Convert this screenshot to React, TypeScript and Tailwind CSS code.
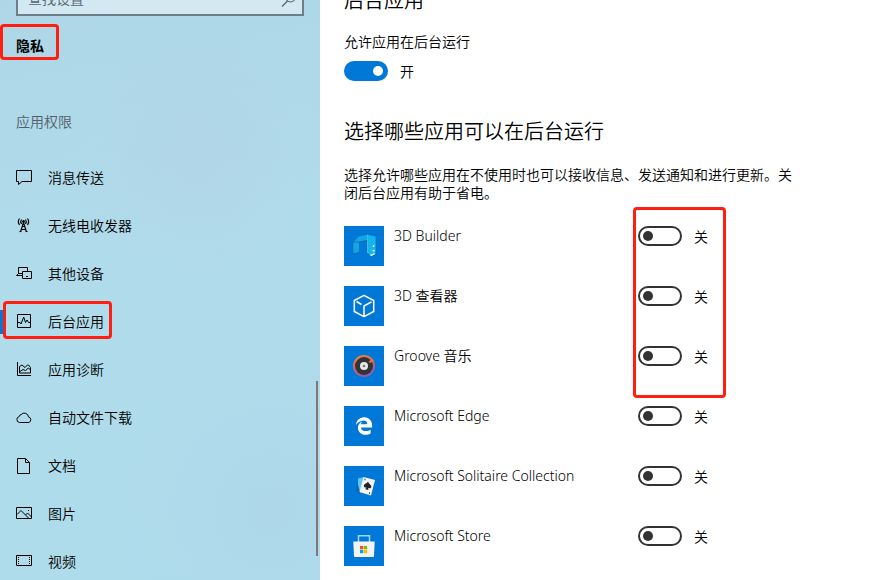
import { useState } from 'react';
import type { ReactNode } from 'react';
import { FaEdgeLegacy } from 'react-icons/fa6';

const NAV_ITEMS: { label: string; icon: ReactNode }[] = [
  { label: '消息传送', icon: <path d="M.5.5h15v11H6l-3.5 3v-3h-2z" /> },
  {
    label: '无线电收发器',
    icon: (
      <>
        <path d="m4.5 14 3-9.5 3 9.5M3.5 13.5h2M9.5 13.5h2M5.5 11.5h4M6.5 8.5h2" strokeWidth="1.2" />
        <path d="M3.5.5Q1.2 3.5 3.5 7M11.5.5q2.3 3 0 6.5M5.5 1.5q-1.5 2 0 4.5M9.5 1.5q1.5 2 0 4.5" strokeWidth="1.2" />
        <circle cx="7.5" cy="3.5" r="1" fill="currentColor" />
      </>
    ),
  },
  {
    label: '其他设备',
    icon: (
      <>
        <path d="M6.5 9.5h-6l2-2v-6h9v4M2.5 7.5h4" />
        <path d="M6.5 5.5h9v7h-9zM10 10.5h2" />
      </>
    ),
  },
  {
    label: '后台应用',
    icon: <path d="M1.5.5h13v13h-13zM2 8.5h2L5 10l2.7-7 1.8 5.5L11 6l1.5 2.5h2" />,
  },
  {
    label: '应用诊断',
    icon: (
      <>
        <path d="M1.5 0v13.5H15" />
        <path d="M3.5 11V4.5L6 3l3 2.5L11.5 3h1l2 2.5V11zM4 9.5l3-2 2.5 1 3-2.5 2 2" />
      </>
    ),
  },
  {
    label: '自动文件下载',
    icon: <path d="M3.5 12.5a3 3 0 0 1-.3-5.9 2.4 2.4 0 0 1 2-2.1 4.2 4.2 0 0 1 7.3 2.4 2.9 2.9 0 0 1 .3 5.6z" />,
  },
  { label: '文档', icon: <path d="M1.5.5h8l4 4v11h-12zM9.5.5v4h4" /> },
  {
    label: '图片',
    icon: <path d="M.5 1.5h15v11H.5zM1 8.5l4-4 7.5 7.5M9.5 9l2-2 4 4M12 4.5h1" />,
  },
  {
    label: '视频',
    icon: (
      <>
        <path d="M.5 1.5h15v10H.5z" />
        <path d="M2.5 3v8M13.5 3v8" strokeDasharray="1 1" />
      </>
    ),
  },
];

const APPS: { name: string; icon: ReactNode }[] = [
  {
    name: '3D Builder',
    icon: (
      <>
        <path d="m9 16 5.5-6 9-1.7v6.2l-8 1.5v10L9 28z" fill="#0fa5e6" stroke="#0a5f9e" strokeWidth=".5" />
        <path d="M9 16h6.5l8-1.5" fill="none" stroke="#0b6fae" strokeWidth=".8" />
        <path d="m23.5 8.3 8.5 2V28l-5 3-3.5-4z" fill="#12b5ec" stroke="#0a5f9e" strokeWidth=".5" />
        <path d="M23.5 8.5V27" stroke="#7bdcf7" strokeWidth=".6" />
        <path d="m28.5 21 1.8-3v3zM27.5 25l3-1.5v2zM26 29l4.5-2v1.5L27 30z" fill="#fff" />
      </>
    ),
  },
  {
    name: '3D 查看器',
    icon: (
      <path
        d="M20 9.3 29.7 14.5v11L20 30.7l-9.7-5.2v-11zM12.5 15.5l5 3M20 30V20l7.5-4.2"
        fill="none"
        stroke="#fff"
        strokeWidth="1.5"
        strokeLinejoin="round"
      />
    ),
  },
  {
    name: 'Groove 音乐',
    icon: (
      <>
        <defs>
          <linearGradient id="groove" x1="0" y1="0" x2=".4" y2="1">
            <stop offset="0" stopColor="#f58a3c" />
            <stop offset=".5" stopColor="#d8695e" />
            <stop offset="1" stopColor="#8e5bb5" />
          </linearGradient>
        </defs>
        <circle cx="20" cy="20" r="11" fill="url(#groove)" />
        <circle cx="20" cy="20" r="9" fill="#333" />
        <path d="m24.5 16 3.5-3.5 2 2-3.5 2.5z" fill="#e5714f" />
        <circle cx="20" cy="20" r="4" fill="#e9e9e9" />
        <circle cx="20" cy="20" r="1.3" fill="#777" />
      </>
    ),
  },
  { name: 'Microsoft Edge', icon: <FaEdgeLegacy x="11" y="11" size={18} color="#fff" /> },
  {
    name: 'Microsoft Solitaire Collection',
    icon: (
      <>
        <path d="m14 12.5 6-1.5-3 16-3-1z" fill="#5cc6fa" />
        <path d="m13 16-1 9 5 4z" fill="#0868b8" />
        <path d="m19.5 11 11.5 3-4 15.5-11.5-3.5z" fill="#f4f4f4" />
        <path d="M24 15.5c.5 2.5 3.7 3.2 3.3 5.5-.4 1.6-2.2 1.7-3.3.7l.4 2.3-3.2-.7 1.3-1.9c-1.5.4-2.900-.5-2.600-2 .5-1.9 3.1-1.6 4.1-3.9z" fill="#222" />
        <path d="M20.5 13.5h1M25 27h1" stroke="#444" strokeWidth="1.5" />
      </>
    ),
  },
  {
    name: 'Microsoft Store',
    icon: (
      <>
        <path d="M14.5 16V9.8h11V16" fill="none" stroke="#9ad8fa" strokeWidth="1.5" />
        <path d="M9.3 15.5h21.4L30 30q0 1-1 1H11q-1 0-1-1z" fill="#f3f3f3" />
        <path d="M16 20h3.3v3.3H16z" fill="#f25022" />
        <path d="M19.9 20h3.3v3.3h-3.3z" fill="#7fba00" />
        <path d="M16 23.9h3.3v3.3H16z" fill="#00a4ef" />
        <path d="M19.9 23.9h3.3v3.3h-3.3z" fill="#ffb900" />
      </>
    ),
  },
];

interface ToggleProps {
  name: string;
  checked: boolean;
  onChange: () => void;
}

/** 开关 */
function Toggle({ name, checked, onChange }: ToggleProps) {
  return (
    <label className="flex h-5 items-center gap-3">
      <input
        type="checkbox"
        role="switch"
        aria-label={name}
        checked={checked}
        onChange={onChange}
        className="flex h-5 w-11 shrink-0 appearance-none items-center rounded-full border-2 border-[#333] px-[3px] before:size-[10px] before:rounded-full before:bg-[#333] checked:justify-end checked:border-[#0078d7] checked:bg-[#0078d7] checked:before:bg-white"
      />
      <span className="pt-[2px]">{checked ? '开' : '关'}</span>
    </label>
  );
}

/** 左侧导航 */
function Sidebar() {
  return (
    <aside className="relative w-80 shrink-0 bg-[#b0daea] bg-[radial-gradient(circle_at_62%_27%,#b1d6e7_0%,transparent_28%),radial-gradient(circle_at_85%_88%,#aed8ea_0%,transparent_30%),linear-gradient(170deg,#aed6e7_0%,#b0dbeb_40%,#aedceb_100%)]">
      <div className="relative mx-4 -mt-5">
        <input
          type="search"
          aria-label="查找设置"
          placeholder="查找设置"
          className="block h-9 w-full border-2 border-[#6c7f89] bg-white/45 px-[10px] placeholder:text-[#56656d]"
        />
        <svg className="absolute right-2 top-3 size-4" viewBox="0 0 16 16" fill="none" stroke="#56656d" strokeWidth="1.2">
          <circle cx="10.5" cy="5.5" r="4.5" />
          <path d="M7.5 9 2 14.5" />
        </svg>
      </div>

      <div className="relative mt-2 flex h-9 items-center px-4">
        <h2 className="pt-2 font-bold">隐私</h2>
        <div className="pointer-events-none absolute inset-y-0 left-0 w-[59px] rounded-sm border-3 border-[#ff1e10]" />
      </div>

      <h3 className="mt-[52px] px-4 leading-5 text-[#4f6069]">应用权限</h3>

      <nav className="mt-[22px]">
        {NAV_ITEMS.map((item) => (
          <a key={item.label} href="#" className="relative flex h-12 items-center gap-4 px-4">
            {item.label === '后台应用' && (
              <>
                <span className="absolute left-0 h-6 w-1 bg-[#0078d7]" />
                <span className="absolute left-[3px] top-[3px] h-[38px] w-[109px] rounded-sm border-3 border-[#ff1e10]" />
              </>
            )}
            <svg className="size-4 shrink-0" viewBox="0 0 16 16" fill="none" stroke="currentColor">
              {item.icon}
            </svg>
            <span>{item.label}</span>
          </a>
        ))}
      </nav>

      {/* 滚动条 */}
      <div className="absolute right-[2px] top-[381px] h-[175px] w-[2px] bg-[#7a7a7a]" />
    </aside>
  );
}

export default function App() {
  const [allowed, setAllowed] = useState(true);
  const [enabled, setEnabled] = useState<string[]>([]);

  const toggleApp = (name: string) =>
    setEnabled((prev) => (prev.includes(name) ? prev.filter((n) => n !== name) : [...prev, name]));

  return (
    <div className="flex h-screen overflow-hidden bg-white font-['Noto_Sans','Noto_Sans_CJK_SC',sans-serif] text-sm font-[350] text-black">
      <Sidebar />

      <main className="min-w-0 flex-1 px-6">
        <h1 className="-mt-[13px] text-xl leading-7">后台应用</h1>

        <p className="mt-[17px] leading-5">允许应用在后台运行</p>
        <div className="mt-[9px]">
          <Toggle name="允许应用在后台运行" checked={allowed} onChange={() => setAllowed(!allowed)} />
        </div>

        <h2 className="mt-[37px] text-xl leading-7">选择哪些应用可以在后台运行</h2>
        <p className="mt-5 max-w-[456px] leading-[18px]">
          选择允许哪些应用在不使用时也可以接收信息、发送通知和进行更新。关闭后台应用有助于省电。
        </p>

        {/* 应用列表 */}
        <div className="relative mt-6 max-w-[364px]">
          <ul className="space-y-5">
            {APPS.map((app) => (
              <li key={app.name} className="flex h-10 items-start gap-[10px]">
                <svg className="size-10 shrink-0 bg-[#0078d7]" viewBox="0 0 40 40">
                  {app.icon}
                </svg>
                <span className="min-w-0 flex-1 whitespace-nowrap leading-5">{app.name}</span>
                <Toggle name={app.name} checked={enabled.includes(app.name)} onChange={() => toggleApp(app.name)} />
              </li>
            ))}
          </ul>
          <div className="pointer-events-none absolute -right-[18px] -top-[19px] h-[191px] w-[93px] rounded-sm border-3 border-[#ff1e10]" />
        </div>
      </main>
    </div>
  );
}
